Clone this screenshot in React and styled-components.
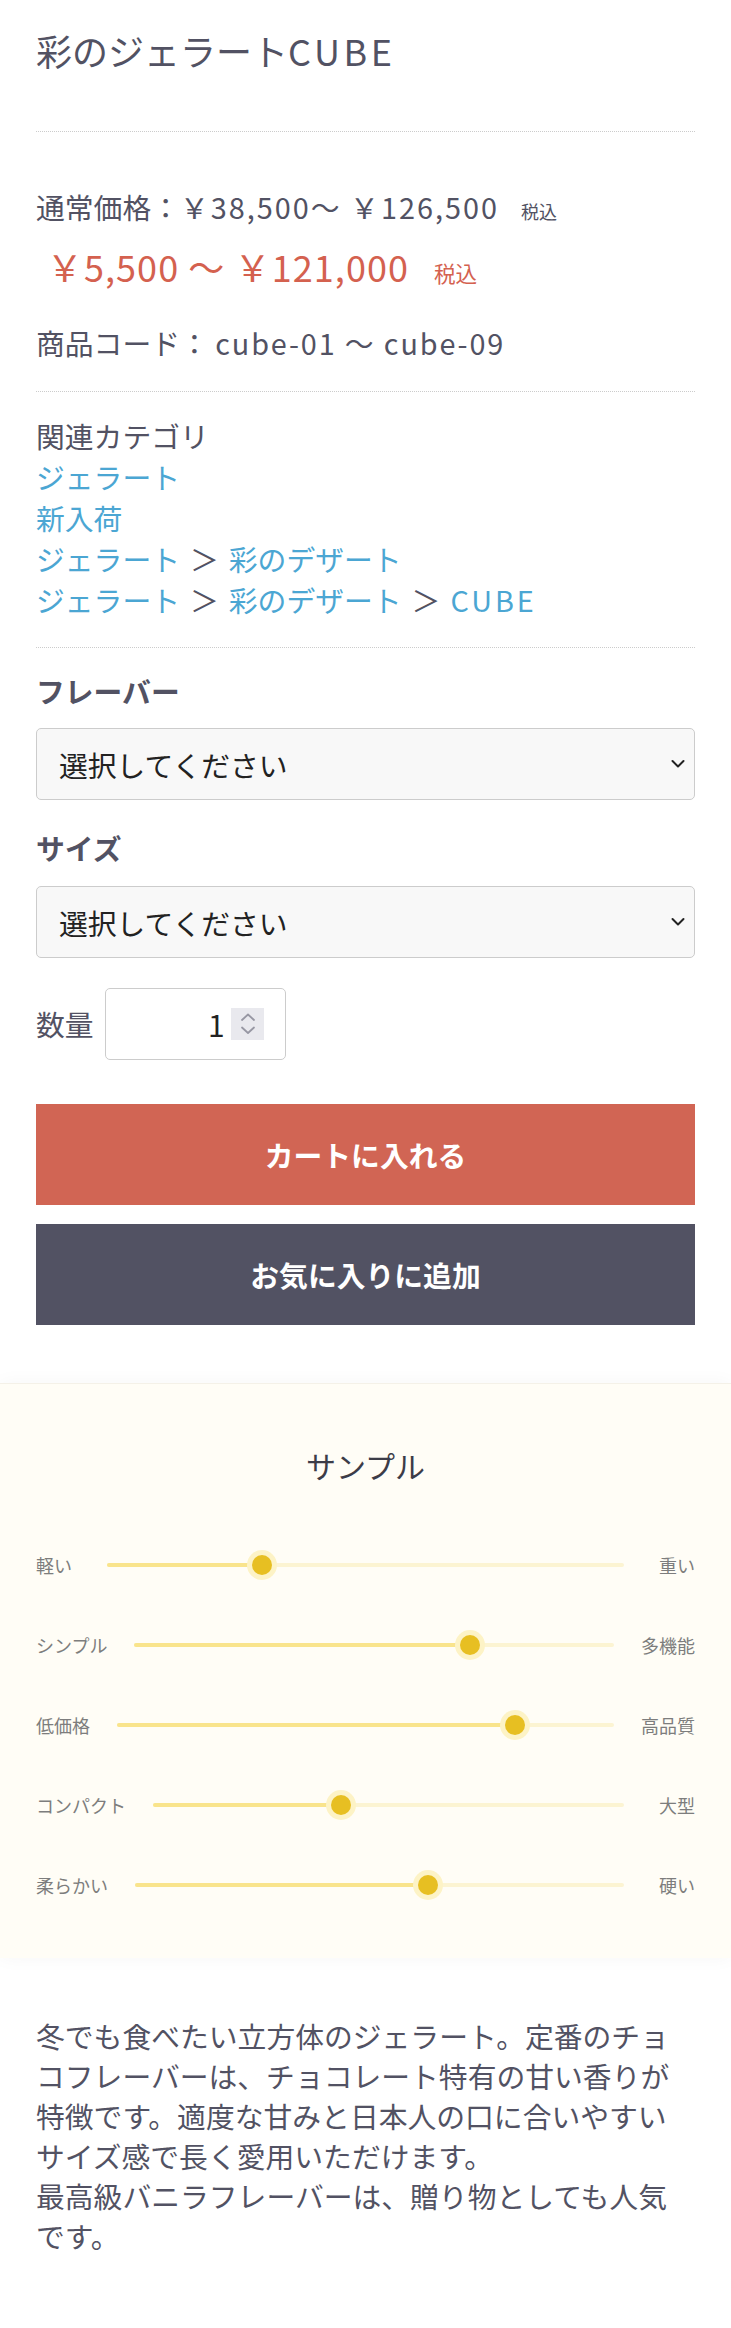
import React from "react";
import styled, { createGlobalStyle } from "styled-components";

const GlobalStyle = createGlobalStyle`
  * { box-sizing: border-box; }
  html, body {
    margin: 0;
    padding: 0;
    background: #fff;
  }
  body {
    font-family: "Noto Sans CJK JP", "Noto Sans", sans-serif;
    color: #525263;
  }
`;

const sliders = [
  { left: "軽い", right: "重い", value: 30 },
  { left: "シンプル", right: "多機能", value: 70 },
  { left: "低価格", right: "高品質", value: 80 },
  { left: "コンパクト", right: "大型", value: 40 },
  { left: "柔らかい", right: "硬い", value: 60 },
];

const categories = [
  ["ジェラート"],
  ["新入荷"],
  ["ジェラート", "彩のデザート"],
  ["ジェラート", "彩のデザート", "CUBE"],
];

const Chevron = () => (
  <svg width="14" height="9" viewBox="0 0 14 9">
    <polyline points="1.5,1.5 7,7 12.5,1.5" fill="none" stroke="#222" strokeWidth="2" strokeLinecap="round" strokeLinejoin="round" />
  </svg>
);

const SpinIcon = () => (
  <svg width="33" height="32" viewBox="0 0 33 32">
    <rect width="33" height="32" fill="#e9e9ee" />
    <polyline points="11,12 17,6.5 23,12" fill="none" stroke="#9797a3" strokeWidth="1.8" strokeLinecap="round" strokeLinejoin="round" />
    <polyline points="11,19.5 17,25 23,19.5" fill="none" stroke="#9797a3" strokeWidth="1.8" strokeLinecap="round" strokeLinejoin="round" />
  </svg>
);

export default function App() {
  return (
    <Page>
      <GlobalStyle />
      <Container>
        <Title>
          彩のジェラート<Latin $ls="0.1em">CUBE</Latin>
        </Title>

        <RegularPrice>
          通常価格：<Latin $ls="0.07em">￥38,500～ ￥126,500</Latin>
          <Tax $size="18px" $gap="22px">税込</Tax>
        </RegularPrice>
        <SalePrice>
          <SaleAmount>￥5,500 ～ ￥121,000</SaleAmount>
          <Tax $size="21.6px" $gap="14px">税込</Tax>
        </SalePrice>
        <Code>
          商品コード： <Latin $ls="0.065em">cube-01 ～ cube-09</Latin>
        </Code>

        <Categories>
          <div>関連カテゴリ</div>
          {categories.map((path, i) => (
            <div key={i}>
              {path.map((name, j) => (
                <React.Fragment key={j}>
                  {j > 0 && <Sep>＞</Sep>}
                  <CatLink href="#" $ls={name === "CUBE" ? "0.1em" : "0"}>
                    {name}
                  </CatLink>
                </React.Fragment>
              ))}
            </div>
          ))}
        </Categories>

        <FieldLabel $top="23px">フレーバー</FieldLabel>
        <SelectWrap $top="17px">
          <Select defaultValue="">
            <option value="">選択してください</option>
          </Select>
          <ChevronBox>
            <Chevron />
          </ChevronBox>
        </SelectWrap>

        <FieldLabel $top="28px">サイズ</FieldLabel>
        <SelectWrap $top="18px">
          <Select defaultValue="">
            <option value="">選択してください</option>
          </Select>
          <ChevronBox>
            <Chevron />
          </ChevronBox>
        </SelectWrap>

        <QtyRow>
          <QtyLabel>数量</QtyLabel>
          <QtyBox>
            <QtyValue>1</QtyValue>
            <SpinIcon />
          </QtyBox>
        </QtyRow>

        <Buttons>
          <ActionButton $bg="#d16554">カートに入れる</ActionButton>
          <ActionButton $bg="#525263">お気に入りに追加</ActionButton>
        </Buttons>
      </Container>

      <Sample>
        <SampleTitle>サンプル</SampleTitle>
        {sliders.map((s) => (
          <SliderRow key={s.left}>
            <SliderLabel>{s.left}</SliderLabel>
            <Track>
              <TrackFill style={{ width: `${s.value}%` }} />
              <Thumb style={{ left: `${s.value}%` }} />
            </Track>
            <SliderLabel $right>{s.right}</SliderLabel>
          </SliderRow>
        ))}
      </Sample>

      <Description>
        冬でも食べたい立方体のジェラート。定番のチョコフレーバーは、チョコレート特有の甘い香りが特徴です。適度な甘みと日本人の口に合いやすいサイズ感で長く愛用いただけます。
        <br />
        最高級バニラフレーバーは、贈り物としても人気です。
      </Description>
    </Page>
  );
}

const Page = styled.div`
  width: 100%;
  min-height: 2328px;
  background: #fff;
`;

const Container = styled.div`
  padding: 0 36px;
`;

const Latin = styled.span`
  letter-spacing: ${(p) => p.$ls};
`;

const Title = styled.h1`
  margin: 0;
  padding: 25px 0 56px;
  font-size: 36px;
  font-weight: 400;
  line-height: 50px;
  border-bottom: 1px dotted #ccc;
`;

const RegularPrice = styled.div`
  margin-top: 55px;
  font-size: 28.8px;
  line-height: 40px;
`;

const Tax = styled.span`
  margin-left: ${(p) => p.$gap};
  font-size: ${(p) => p.$size};
  letter-spacing: 0;
`;

const SalePrice = styled.div`
  margin-top: 10px;
  color: #d4614f;
  font-size: 36px;
  line-height: 50px;
`;

const SaleAmount = styled.span`
  padding: 0 0.3em;
  letter-spacing: 0.03em;
`;

const Code = styled.div`
  margin-top: 25px;
  padding-bottom: 28px;
  font-size: 28.8px;
  line-height: 40px;
  border-bottom: 1px dotted #ccc;
`;

const Categories = styled.div`
  padding: 23px 0 27px;
  font-size: 28.8px;
  line-height: 41px;
  border-bottom: 1px dotted #ccc;
`;

const CatLink = styled.a`
  color: #4ba6d3;
  text-decoration: none;
  letter-spacing: ${(p) => p.$ls};
`;

const Sep = styled.span`
  margin: 0 10px;
  color: #525263;
`;

const FieldLabel = styled.div`
  margin-top: ${(p) => p.$top};
  font-size: 28.8px;
  font-weight: 700;
  line-height: 40px;
`;

const SelectWrap = styled.div`
  position: relative;
  margin-top: ${(p) => p.$top};
`;

const Select = styled.select`
  display: block;
  width: 100%;
  height: 72px;
  padding: 0 50px 0 22px;
  appearance: none;
  -webkit-appearance: none;
  border: 1px solid #ccc;
  border-radius: 5px;
  background: #f8f8f8;
  color: #222;
  font-family: inherit;
  font-size: 28.8px;
`;

const ChevronBox = styled.span`
  position: absolute;
  right: 10px;
  top: 50%;
  display: flex;
  transform: translateY(-50%);
  pointer-events: none;
`;

const QtyRow = styled.div`
  display: flex;
  align-items: center;
  gap: 11px;
  margin-top: 30px;
`;

const QtyLabel = styled.span`
  font-size: 28.8px;
  line-height: 40px;
`;

const QtyBox = styled.div`
  display: flex;
  align-items: center;
  justify-content: flex-end;
  gap: 6px;
  width: 181px;
  height: 72px;
  padding-right: 21px;
  border: 1px solid #ccc;
  border-radius: 5px;
  background: #fff;
`;

const QtyValue = styled.span`
  color: #222;
  font-size: 30px;
  line-height: 1;
`;

const Buttons = styled.div`
  display: flex;
  flex-direction: column;
  gap: 19px;
  margin-top: 44px;
`;

const ActionButton = styled.button`
  width: 100%;
  height: 101px;
  border: none;
  background: ${(p) => p.$bg};
  color: #fff;
  font-family: inherit;
  font-size: 28.8px;
  font-weight: 700;
  cursor: pointer;
`;

const Sample = styled.section`
  margin-top: 58px;
  padding: 60px 36px 33px;
  background: #fffdf6;
  border-top: 1px solid #f4f1e8;
  box-shadow: 0 0 18px rgba(0, 0, 0, 0.04);
`;

const SampleTitle = styled.h2`
  margin: 0 0 39px;
  color: #3c3c48;
  font-size: 30px;
  font-weight: 400;
  line-height: 42px;
  text-align: center;
`;

const SliderRow = styled.div`
  display: flex;
  align-items: center;
  gap: 27px;
  height: 80px;
`;

const SliderLabel = styled.span`
  min-width: 44px;
  color: #7d7d7d;
  font-size: 18px;
  text-align: ${(p) => (p.$right ? "right" : "left")};
  white-space: nowrap;
`;

const Track = styled.div`
  position: relative;
  flex: 1;
  height: 4px;
  border-radius: 2px;
  background: #fcf4d2;
`;

const TrackFill = styled.div`
  position: absolute;
  left: 0;
  top: 0;
  bottom: 0;
  border-radius: 2px;
  background: #f9e48c;
`;

const Thumb = styled.div`
  position: absolute;
  top: 50%;
  width: 20px;
  height: 20px;
  border-radius: 50%;
  background: #e7bf22;
  box-shadow: 0 0 0 5px #fdf3c6;
  transform: translate(-50%, -50%);
`;

const Description = styled.p`
  margin: 0;
  padding: 58px 36px 60px;
  font-size: 28.8px;
  line-height: 40px;
`;
